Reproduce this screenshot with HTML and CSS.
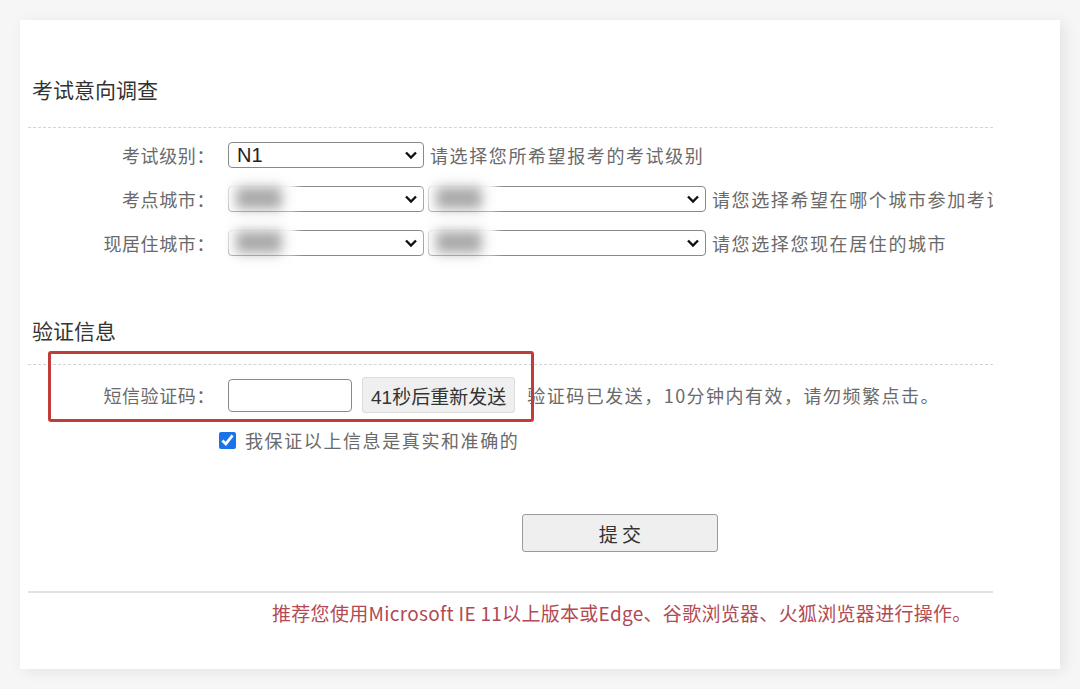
FILE: index.html
```html
<!DOCTYPE html>
<html lang="zh-CN">
<head>
    <meta charset="UTF-8">
    <meta name="viewport" content="width=device-width, initial-scale=1.0">
    <title>考试意向调查</title>
    <link rel="stylesheet" href="styles.css">
</head>
<body>
    <div class="card">
        <div class="content">
            <h2 class="section-title">考试意向调查</h2>
            <div class="rows">
                <div class="form-row">
                    <label class="row-label">考试级别：</label>
                    <select class="pick pick-short">
                        <option>N1</option>
                    </select>
                    <span class="hint">请选择您所希望报考的考试级别</span>
                </div>
                <div class="form-row">
                    <label class="row-label">考点城市：</label>
                    <span class="pick-wrap">
                        <select class="pick pick-short"><option></option></select>
                        <span class="smudge"></span>
                    </span>
                    <span class="pick-wrap">
                        <select class="pick pick-long"><option></option></select>
                        <span class="smudge"></span>
                    </span>
                    <span class="hint">请您选择希望在哪个城市参加考试</span>
                </div>
                <div class="form-row">
                    <label class="row-label">现居住城市：</label>
                    <span class="pick-wrap">
                        <select class="pick pick-short"><option></option></select>
                        <span class="smudge"></span>
                    </span>
                    <span class="pick-wrap">
                        <select class="pick pick-long"><option></option></select>
                        <span class="smudge"></span>
                    </span>
                    <span class="hint">请您选择您现在居住的城市</span>
                </div>
            </div>

            <h2 class="section-title second">验证信息</h2>
            <div class="form-row sms-row">
                <div class="marker"></div>
                <label class="row-label">短信验证码：</label>
                <input class="code-input" type="text">
                <button class="resend" type="button">41秒后重新发送</button>
                <span class="hint">验证码已发送，10分钟内有效，请勿频繁点击。</span>
            </div>
            <div class="agree-row">
                <input type="checkbox" id="agree" checked>
                <label for="agree">我保证以上信息是真实和准确的</label>
            </div>

            <div class="submit-row">
                <button class="submit" type="button">提 交</button>
            </div>

            <div class="footer-note">推荐您使用Microsoft IE 11以上版本或Edge、谷歌浏览器、火狐浏览器进行操作。</div>
        </div>
    </div>
</body>
</html>
```

FILE: styles.css
```css
body {
    margin: 0;
    padding: 20px;
    background: #f6f6f6;
    font-family: "Liberation Serif", "Noto Sans CJK SC", serif;
    color: #666;
}

.card {
    width: 1040px;
    height: 649px;
    box-sizing: border-box;
    padding-left: 8px;
    background: #fff;
    box-shadow: 4px 2px 14px rgba(0, 0, 0, 0.08);
}

.content {
    width: 965px;
    overflow: hidden;
}

.section-title {
    margin: 54px 0 0 0;
    padding: 0 0 23px 4px;
    font-family: "Noto Sans CJK SC", sans-serif;
    font-size: 21px;
    font-weight: normal;
    line-height: 30px;
    color: #333;
    border-bottom: 1px dashed #d4d4d4;
}

.section-title.second {
    margin-top: 50px;
    padding-bottom: 19px;
}

.rows {
    margin-top: 5px;
}

.form-row {
    display: flex;
    align-items: center;
    height: 44px;
    white-space: nowrap;
}

.row-label {
    flex: none;
    width: 187px;
    margin-right: 13px;
    text-align: right;
    font-size: 18px;
    font-family: "Noto Sans CJK SC", serif;
    color: #6a6a6a;
    letter-spacing: 0.6px;
}

.pick-wrap {
    position: relative;
    display: inline-flex;
    margin-right: 4px;
}

.pick {
    appearance: none;
    height: 26px;
    box-sizing: border-box;
    padding: 0 28px 0 8px;
    border: 1px solid #8a8a8a;
    border-radius: 4px;
    background: #fff url("data:image/svg+xml,%3Csvg xmlns='http://www.w3.org/2000/svg' width='14' height='10' viewBox='0 0 14 10'%3E%3Cpath d='M2 2.5 L7 7.5 L12 2.5' fill='none' stroke='%23111' stroke-width='2.4'/%3E%3C/svg%3E") no-repeat right 5px center;
    font-family: "Liberation Sans", sans-serif;
    font-size: 20px;
    color: #222;
}

.pick-short {
    width: 196px;
}

.pick-long {
    width: 278px;
}

.form-row > .pick {
    margin-right: 6px;
}

.smudge {
    position: absolute;
    left: -2px;
    top: -6px;
    width: 70px;
    height: 30px;
    background: #fff;
    filter: blur(4px);
}

.smudge::after {
    content: "";
    position: absolute;
    left: 10px;
    top: 7px;
    width: 46px;
    height: 22px;
    background: #a9a9a9;
    filter: blur(4px);
}

.pick-wrap + .pick-wrap {
    margin-right: 6px;
}

.hint {
    font-size: 18px;
    font-family: "Noto Sans CJK SC", serif;
    color: #6a6a6a;
    letter-spacing: 1.6px;
}

.sms-row {
    position: relative;
    margin-top: 8px;
}

.marker {
    position: absolute;
    left: 20px;
    top: -22px;
    width: 486px;
    height: 71px;
    box-sizing: border-box;
    border: 3px solid #c23b3b;
    border-radius: 3px;
}

.code-input {
    width: 124px;
    height: 33px;
    box-sizing: border-box;
    margin-right: 10px;
    border: 1px solid #8a8a8a;
    border-radius: 4px;
}

.resend {
    height: 36px;
    padding: 0 8px;
    margin-right: 12px;
    border: 1px solid #dcdcdc;
    border-radius: 3px;
    background: #efefef;
    font-family: "Liberation Sans", "Noto Sans CJK SC", sans-serif;
    font-size: 19px;
    color: #333;
}

.sms-row .hint {
    letter-spacing: 1.5px;
}

.agree-row {
    display: flex;
    align-items: center;
    height: 46px;
    padding-left: 191px;
    font-size: 18px;
    font-family: "Noto Sans CJK SC", serif;
    color: #6a6a6a;
}

.agree-row input {
    width: 17px;
    height: 17px;
    margin: 0 9px 0 0;
    accent-color: #1a73e8;
}

.agree-row label {
    letter-spacing: 1.6px;
}

.submit-row {
    margin-top: 51px;
    padding-left: 494px;
}

.submit {
    width: 196px;
    height: 38px;
    border: 1px solid #9a9a9a;
    border-radius: 3px;
    background: #efefef;
    font-family: "Noto Sans CJK SC", sans-serif;
    font-size: 19px;
    color: #333;
}

.footer-note {
    margin-top: 39px;
    padding: 7px 0 0 244px;
    border-top: 2px solid #e2e2e2;
    font-size: 19px;
    line-height: 26px;
    font-family: "Noto Sans CJK SC", serif;
    color: #b24a55;
    letter-spacing: 0.3px;
    white-space: nowrap;
}
```
